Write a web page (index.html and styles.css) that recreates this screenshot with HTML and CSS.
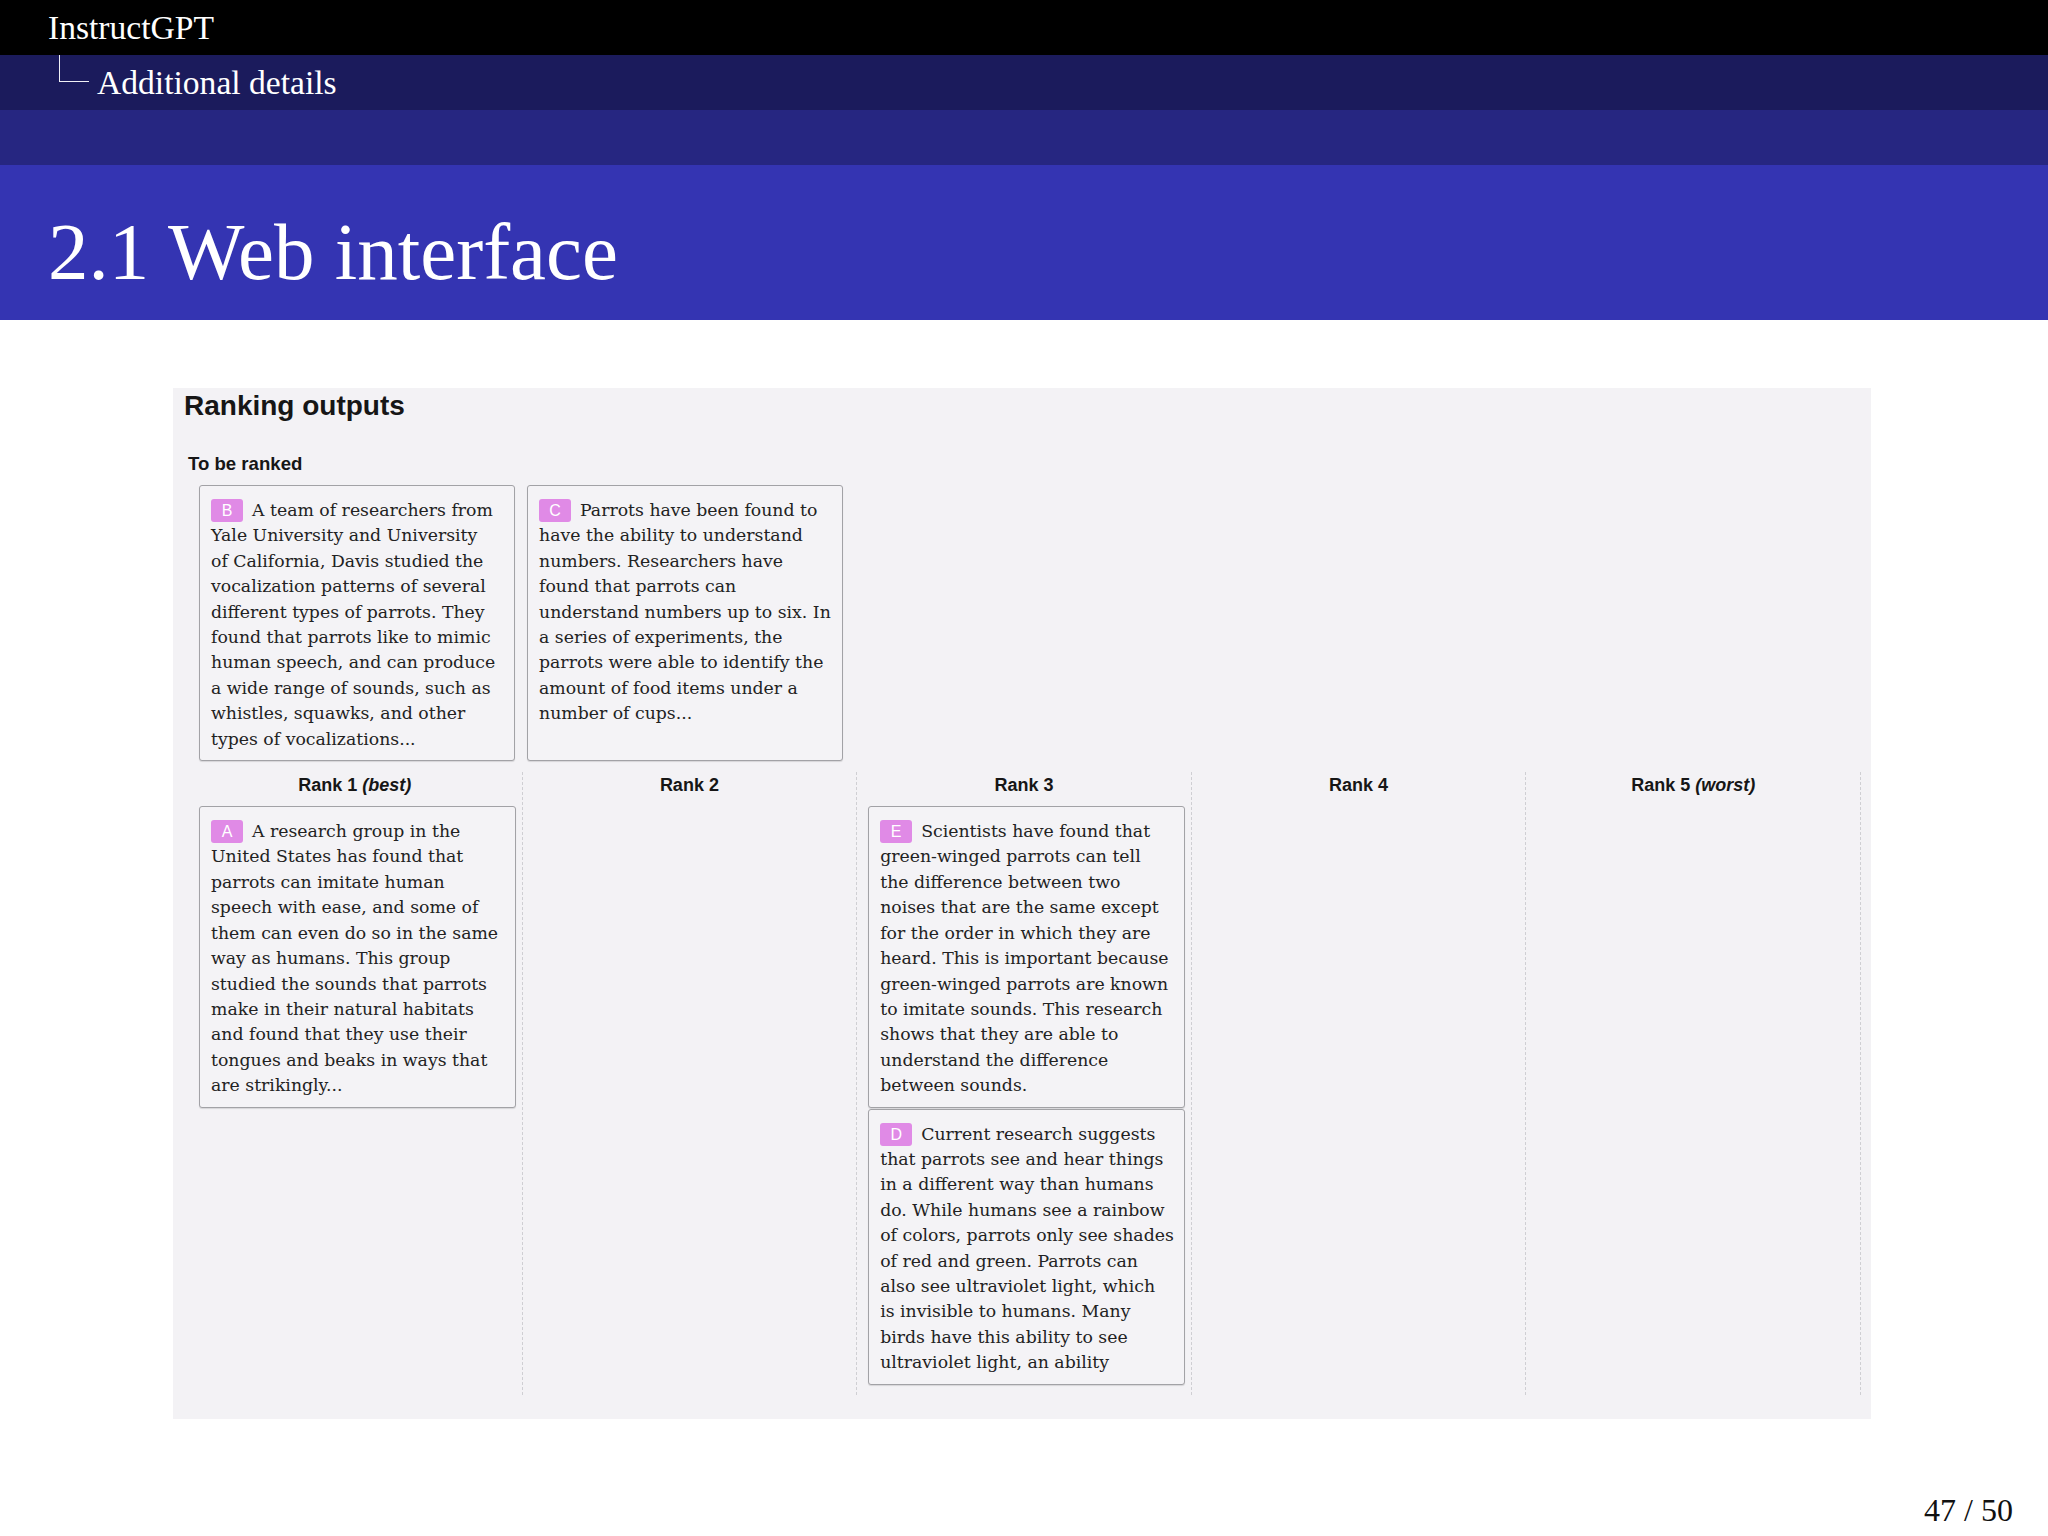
FILE: index.html
```html
<!DOCTYPE html>
<html lang="en">
<head>
<meta charset="utf-8">
<title>2.1 Web interface</title>
<link rel="stylesheet" href="styles.css">
</head>
<body>
<div class="slide">
  <header class="headline">
    <div class="bar bar-section">InstructGPT</div>
    <div class="bar bar-subsection"><span class="tree"></span><span class="sub-name">Additional details</span></div>
    <div class="bar bar-empty"></div>
  </header>
  <h1 class="frametitle">2.1 Web interface</h1>

  <main class="content">
    <section class="panel">
      <h2 class="panel-title">Ranking outputs</h2>
      <div class="group">
        <div class="group-label">To be ranked</div>
        <div class="pool">
          <div class="card"><span class="badge">B</span>A team of researchers from<br>Yale University and University<br>of California, Davis studied the<br>vocalization patterns of several<br>different types of parrots. They<br>found that parrots like to mimic<br>human speech, and can produce<br>a wide range of sounds, such as<br>whistles, squawks, and other<br>types of vocalizations...</div>
          <div class="card"><span class="badge">C</span>Parrots have been found to<br>have the ability to understand<br>numbers. Researchers have<br>found that parrots can<br>understand numbers up to six. In<br>a series of experiments, the<br>parrots were able to identify the<br>amount of food items under a<br>number of cups...</div>
        </div>

        <div class="ranks">
          <div class="rank-col">
            <div class="rank-head">Rank 1 <em>(best)</em></div>
            <div class="card"><span class="badge">A</span>A research group in the<br>United States has found that<br>parrots can imitate human<br>speech with ease, and some of<br>them can even do so in the same<br>way as humans. This group<br>studied the sounds that parrots<br>make in their natural habitats<br>and found that they use their<br>tongues and beaks in ways that<br>are strikingly...</div>
          </div>
          <div class="rank-col">
            <div class="rank-head">Rank 2</div>
          </div>
          <div class="rank-col">
            <div class="rank-head">Rank 3</div>
            <div class="card"><span class="badge">E</span>Scientists have found that<br>green-winged parrots can tell<br>the difference between two<br>noises that are the same except<br>for the order in which they are<br>heard. This is important because<br>green-winged parrots are known<br>to imitate sounds. This research<br>shows that they are able to<br>understand the difference<br>between sounds.</div>
            <div class="card"><span class="badge">D</span>Current research suggests<br>that parrots see and hear things<br>in a different way than humans<br>do. While humans see a rainbow<br>of colors, parrots only see shades<br>of red and green. Parrots can<br>also see ultraviolet light, which<br>is invisible to humans. Many<br>birds have this ability to see<br>ultraviolet light, an ability</div>
          </div>
          <div class="rank-col">
            <div class="rank-head">Rank 4</div>
          </div>
          <div class="rank-col">
            <div class="rank-head">Rank 5 <em>(worst)</em></div>
          </div>
        </div>
      </div>
    </section>
  </main>

  <footer class="pagenum">47 / 50</footer>
</div>
</body>
</html>
```

FILE: styles.css
```css
html, body {
  margin: 0;
  padding: 0;
  background: #ffffff;
}

.slide {
  width: 2048px;
  height: 1536px;
  overflow: hidden;
  position: relative;
  background: #ffffff;
  font-family: "Liberation Serif", "Times New Roman", serif;
}

/* ---------- beamer headline ---------- */
.bar {
  height: 55px;
  color: #ffffff;
  font-family: "Liberation Serif", "Times New Roman", serif;
  font-size: 33.6px;
  line-height: 55px;
  white-space: nowrap;
}

.bar-section {
  background: #000000;
  padding-left: 48px;
}

.bar-subsection {
  background: #1b1b5c;
  display: flex;
  align-items: flex-start;
  padding-left: 59px;
}

.tree {
  width: 29px;
  height: 26px;
  border-left: 1.5px solid #f0f0f6;
  border-bottom: 1.5px solid #f0f0f6;
  flex: none;
}

.sub-name {
  margin-left: 8px;
}

.bar-empty {
  background: #262681;
}

.frametitle {
  margin: 0;
  height: 155px;
  box-sizing: border-box;
  padding: 41px 0 0 48px;
  background: #3434b2;
  color: #ffffff;
  font-family: "Liberation Serif", "Times New Roman", serif;
  font-weight: normal;
  font-size: 81px;
  line-height: 93px;
  white-space: nowrap;
}

/* ---------- slide content ---------- */
.content {
  padding-top: 68px;
}

.panel {
  margin-left: 173px;
  width: 1698px;
  box-sizing: border-box;
  padding: 2px 10px 24px 11px;
  background: #f3f2f5;
  font-family: "Liberation Sans", Arial, sans-serif;
  color: #161616;
}

.panel-title {
  margin: 0;
  font-size: 28px;
  font-weight: bold;
  line-height: 32px;
}

.group {
  padding-left: 4px;
}

.group-label {
  margin-top: 31px;
  margin-bottom: 10px;
  font-size: 18.6px;
  font-weight: bold;
  line-height: 22px;
}

.pool {
  display: flex;
  gap: 12px;
  padding-left: 11px;
}

.pool .card {
  width: 316px;
}

.ranks {
  display: grid;
  grid-template-columns: repeat(5, 1fr);
  margin-top: 11px;
}

.rank-col {
  border-right: 1px dashed #cfcfd3;
  padding: 2px 0 10px 0;
  min-width: 0;
}

.rank-head {
  text-align: center;
  font-size: 18px;
  font-weight: bold;
  line-height: 22px;
  margin-bottom: 10px;
  color: #161616;
}

.rank-head em {
  font-style: italic;
}

.rank-col .card {
  margin: 0 6px 0 11px;
}

.rank-col .card + .card {
  margin-top: 1px;
}

/* ---------- cards ---------- */
.card {
  box-sizing: border-box;
  border: 1px solid #a2a2a6;
  border-radius: 3px;
  box-shadow: 0 1px 1px rgba(0, 0, 0, 0.12);
  background: #f4f3f6;
  padding: 12px 11px 8px 11px;
  font-family: "DejaVu Serif", "Liberation Serif", serif;
  font-size: 17.3px;
  line-height: 25.4px;
  color: #222222;
  white-space: nowrap;
}

.badge {
  display: inline-block;
  width: 32px;
  height: 23px;
  margin-right: 9px;
  border-radius: 3px;
  background: #e08ae6;
  color: #ffffff;
  font-family: "Liberation Sans", Arial, sans-serif;
  font-size: 16px;
  line-height: 23px;
  text-align: center;
  vertical-align: 0px;
}

/* ---------- footer ---------- */
.pagenum {
  margin-top: 73px;
  padding-right: 35px;
  text-align: right;
  font-family: "Liberation Serif", "Times New Roman", serif;
  font-size: 32px;
  line-height: 36px;
  color: #111111;
}
```
